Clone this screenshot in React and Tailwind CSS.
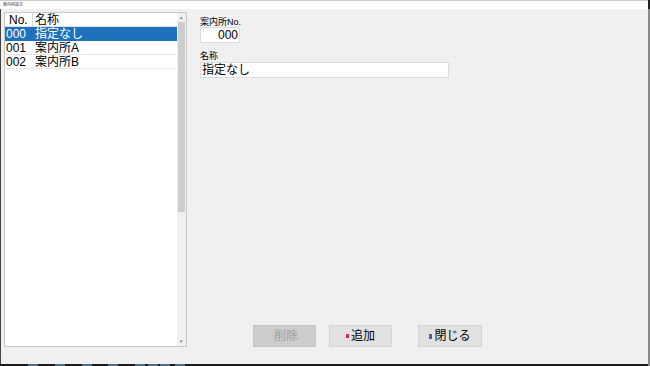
import React from "react";

const F = { fontFamily: '"Liberation Sans", "Noto Sans CJK JP", sans-serif' };

function Row({ no, name, selected }) {
  return (
    <div
      className={
        "flex h-[14px] items-center border-b text-[12px] leading-[14px] " +
        (selected ? "bg-[#1f71bc] text-white border-[#1f71bc]" : "bg-white text-black border-[#e6e6e6]")
      }
    >
      <div className="w-[28px] pl-[1px]">{no}</div>
      <div className="pl-[2px]">{name}</div>
    </div>
  );
}

export default function App() {
  const blocks = [28, 55, 82, 108, 135, 148, 160, 175];
  return (
    <div className="w-[650px] h-[366px] flex bg-[#1b1b1b] overflow-hidden" style={F}>
      <div className="flex flex-col w-[648px] h-full">
        <div className="h-[9px] bg-white border-t border-[#cccccc] flex items-center pl-[3px] text-[4px] leading-[4px] text-[#333]">
          案内所設定
        </div>
        <div className="flex-1 bg-[#f0f0f0] border-l border-[#444] flex">
          <div className="ml-[3px] mt-[3px] w-[183px] h-[335px] border border-[#c8c8c8] bg-white flex">
            <div className="flex-1 flex flex-col">
              <div className="flex h-[14px] items-center text-[12px] leading-[14px] text-black border-b border-[#e0e0e0]">
                <div className="w-[28px] pl-[4px] border-r border-[#d8d8d8]">No.</div>
                <div className="pl-[2px]">名称</div>
              </div>
              <Row no="000" name="指定なし" selected />
              <Row no="001" name="案内所A" />
              <Row no="002" name="案内所B" />
            </div>
            <div className="w-[9px] bg-[#f0f0f0] flex flex-col items-center">
              <div className="h-[9px] w-full flex items-center justify-center text-[5px] text-[#777]">▴</div>
              <div className="w-[7px] h-[190px] bg-[#cdcdcd]"></div>
              <div className="flex-1"></div>
              <div className="h-[9px] w-full flex items-center justify-center text-[5px] text-[#777]">▾</div>
            </div>
          </div>
          <div className="ml-[13px] pt-[8px] flex-1 flex flex-col pb-[17px]">
            <div className="text-[9px] leading-[10px] text-black">案内所No.</div>
            <div className="w-[40px] h-[16px] bg-white border border-[#dcdcdc] text-[12px] leading-[14px] text-right pr-[1px] text-black">
              000
            </div>
            <div className="mt-[8px] text-[9px] leading-[11px] text-black">名称</div>
            <div className="w-[249px] h-[16px] bg-white border border-[#dcdcdc] text-[12px] leading-[14px] pl-[1px] text-black">
              指定なし
            </div>
            <div className="mt-auto flex">
              <div className="ml-[53px] w-[63px] h-[22px] bg-[#cccccc] border border-[#c4c4c4] flex items-center justify-center text-[12px] text-[#a0a0a0]">
                <span className="text-[6px] mr-[1px] text-[#b0b0b0]">▫</span>削除
              </div>
              <div className="ml-[13px] w-[63px] h-[22px] bg-[#e1e1e1] border border-[#d4d4d4] flex items-center justify-center text-[12px] text-black">
                <span className="inline-block w-[3px] h-[4px] bg-[#d03050] mr-[2px]"></span>追加
              </div>
              <div className="ml-[26px] w-[64px] h-[22px] bg-[#e1e1e1] border border-[#d4d4d4] flex items-center justify-center text-[12px] text-black">
                <span className="inline-block w-[3px] h-[5px] bg-[#7a4a9a] mr-[2px]"></span>閉じる
              </div>
            </div>
          </div>
        </div>
        <div className="h-[2px] bg-[#1b1b1b] flex relative">
          {blocks.map((x) => (
            <div key={x} className="absolute top-0 h-[2px] w-[10px] bg-[#4f6b80]" style={{ left: x }}></div>
          ))}
        </div>
      </div>
      <div className="w-[2px] h-full flex flex-col">
        <div className="h-[9px] bg-[#222]"></div>
        <div className="flex-1 bg-[#8a8a8a]"></div>
      </div>
    </div>
  );
}
